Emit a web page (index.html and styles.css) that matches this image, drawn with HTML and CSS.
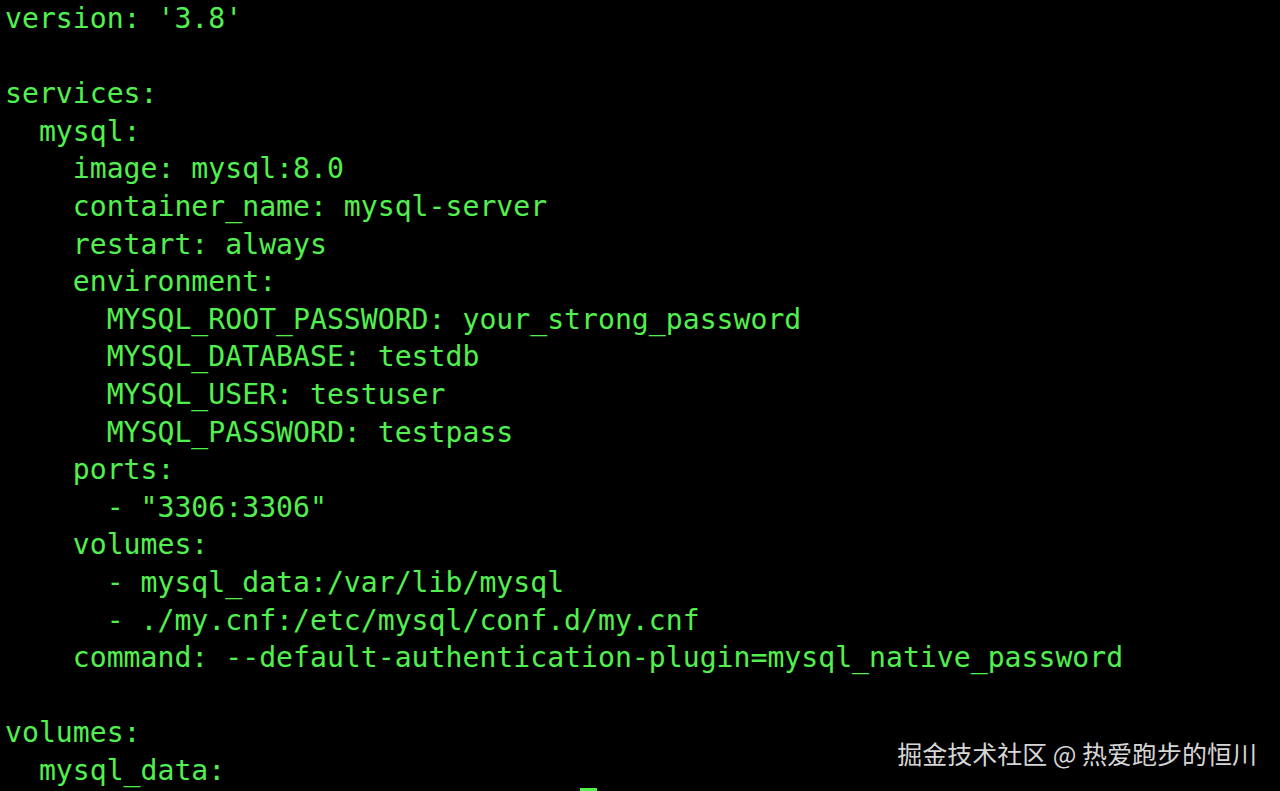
FILE: index.html
```html
<!DOCTYPE html>
<html lang="en">
<head>
<meta charset="utf-8">
<title>docker-compose.yml</title>
<link rel="stylesheet" href="styles.css">
</head>
<body>
<main class="terminal">
<pre class="code">version: '3.8'

services:
  mysql:
    image: mysql:8.0
    container_name: mysql-server
    restart: always
    environment:
      MYSQL_ROOT_PASSWORD: your_strong_password
      MYSQL_DATABASE: testdb
      MYSQL_USER: testuser
      MYSQL_PASSWORD: testpass
    ports:
      - "3306:3306"
    volumes:
      - mysql_data:/var/lib/mysql
      - ./my.cnf:/etc/mysql/conf.d/my.cnf
    command: --default-authentication-plugin=mysql_native_password

volumes:
  mysql_data:</pre>
<span class="cursor"></span>
<div class="watermark">掘金技术社区 @ 热爱跑步的恒川</div>
</main>
</body>
</html>
```
FILE: styles.css
```css
html, body {
  margin: 0;
  padding: 0;
  background: #000;
  overflow: hidden;
}
.terminal {
  position: relative;
  width: 1280px;
  height: 791px;
  background: #000;
  overflow: hidden;
}
.code {
  margin: 0;
  padding: 0 0 0 5px;
  font-family: "DejaVu Sans Mono", "Liberation Mono", monospace;
  font-size: 28.15px;
  line-height: 37.6px;
  color: #52f04f;
  white-space: pre;
}
.cursor {
  position: absolute;
  left: 580px;
  top: 788px;
  width: 17px;
  height: 10px;
  background: #52f04f;
}
.watermark {
  position: absolute;
  right: 23px;
  top: 736px;
  font-family: "Noto Sans CJK SC", sans-serif;
  font-size: 25px;
  line-height: 34px;
  color: #d6d6d6;
  white-space: nowrap;
}
```
